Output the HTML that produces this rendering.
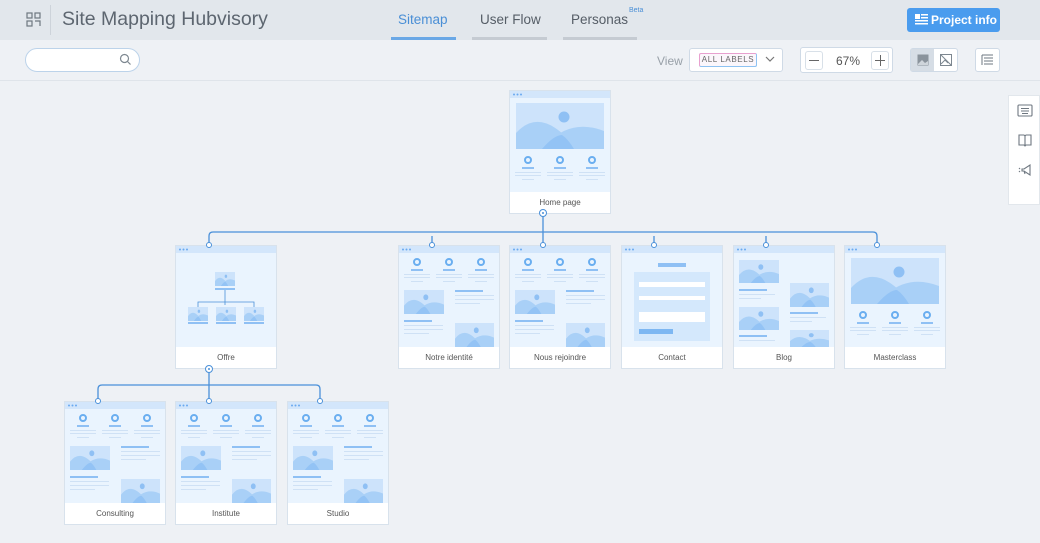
<!DOCTYPE html>
<html><head><meta charset="utf-8"><style>
*{box-sizing:border-box;margin:0;padding:0}
body{width:1040px;height:543px;overflow:hidden;background:#eef1f5;font-family:"Liberation Sans",sans-serif;position:relative}
.hdr{position:absolute;left:0;top:0;width:1040px;height:40px;background:#e2e7ec}
.title{position:absolute;left:62px;top:8px;font-size:19.5px;color:#5d6670}
.div{position:absolute;left:50px;top:5px;width:1px;height:30px;background:#cdd3da}
.tab{position:absolute;top:12px;font-size:13.5px;color:#555d66}
.ul{position:absolute;top:37px;height:3px;background:#c5cbd2}
.btn{position:absolute;left:907px;top:8px;width:93px;height:24px;background:#4a9cee;border-radius:3px;color:#fff;font-size:12px;font-weight:bold;line-height:24px;padding-left:24px;white-space:nowrap}
.box{position:absolute;background:#fff;border:1px solid #cfdae6;border-radius:3px}
</style></head><body>
<div class="hdr">
 <svg style="position:absolute;left:26px;top:12px" width="15" height="15" viewBox="0 0 15 15" fill="none" stroke="#6e7780" stroke-width="1.2"><rect x="1" y="1" width="5" height="5"/><rect x="9" y="1" width="5" height="5"/><rect x="1" y="9" width="5" height="5"/><path d="M9 9h5v5"/></svg>
 <div class="div"></div>
 <div class="title">Site Mapping Hubvisory</div>
 <div class="tab" style="left:398px;color:#4a8fd6">Sitemap</div>
 <div class="ul" style="left:391px;width:65px;background:#6aa8e6"></div>
 <div class="tab" style="left:480px">User Flow</div>
 <div class="ul" style="left:472px;width:75px"></div>
 <div class="tab" style="left:571px">Personas</div>
 <div style="position:absolute;left:629px;top:7px;font-size:7px;color:#4a8fd6">Beta</div>
 <div class="ul" style="left:563px;width:74px"></div>
 <div class="btn"><svg style="position:absolute;left:8px;top:6px" width="13" height="12" viewBox="0 0 13 12" fill="#fff"><rect x="0" y="0" width="5" height="5"/><rect x="6" y="0" width="7" height="1.5"/><rect x="6" y="3" width="7" height="1.5"/><rect x="0" y="6" width="13" height="1.5"/><rect x="0" y="9" width="13" height="1.5"/></svg>Project info</div>
</div>
<div class="box" style="left:25px;top:48px;width:115px;height:24px;border-radius:12px;border-color:#bcd3ea"></div>
<svg style="position:absolute;left:119px;top:53px" width="13" height="13" viewBox="0 0 13 13" fill="none" stroke="#7d8790" stroke-width="1.2"><circle cx="5.5" cy="5.5" r="4"/><path d="M8.5 8.5l3 3"/></svg>
<div style="position:absolute;left:0;top:80px;width:1040px;height:1px;background:#dfe4ea"></div>
<div style="position:absolute;left:657px;top:54px;font-size:12px;color:#98a0a8">View</div>
<div class="box" style="left:689px;top:48px;width:94px;height:24px"></div>
<div style="position:absolute;left:699px;top:53px;width:58px;height:14px;border:1px solid;border-color:#e8a0cf #8ec2f2 #8ec2f2 #e8a0cf;border-radius:2px;background:#fbf6fb;font-size:8px;letter-spacing:.6px;color:#666;text-align:center;line-height:12px">ALL LABELS</div>
<svg style="position:absolute;left:765px;top:56px" width="10" height="7" viewBox="0 0 10 7" fill="none" stroke="#777" stroke-width="1.2"><path d="M1 1l4 4 4-4"/></svg>
<div class="box" style="left:800px;top:47px;width:93px;height:26px"></div>
<div class="box" style="left:805px;top:51px;width:18px;height:19px;border-color:#d8e0e8"></div>
<div style="position:absolute;left:809px;top:60px;width:10px;height:1px;background:#666"></div>
<div style="position:absolute;left:836px;top:54px;font-size:12px;color:#555">67%</div>
<div class="box" style="left:871px;top:51px;width:18px;height:19px;border-color:#d8e0e8"></div>
<div style="position:absolute;left:875px;top:60px;width:10px;height:1px;background:#666"></div>
<div style="position:absolute;left:879.5px;top:55px;width:1px;height:11px;background:#666"></div>
<div class="box" style="left:910px;top:48px;width:48px;height:24px"></div>
<div style="position:absolute;left:911px;top:49px;width:23px;height:22px;background:#d6dde5"></div>
<svg style="position:absolute;left:917px;top:54px" width="12" height="12" viewBox="0 0 12 12"><rect x=".5" y=".5" width="11" height="11" fill="#8a939c"/><path d="M1 10l4-4 3 3 3-2v4H1z" fill="#cfd5db"/></svg>
<svg style="position:absolute;left:940px;top:54px" width="12" height="12" viewBox="0 0 12 12" fill="none" stroke="#7d8790" stroke-width="1"><rect x=".5" y=".5" width="11" height="11"/><path d="M1 1l10 10M1 10l4-4 3 3"/></svg>
<div class="box" style="left:975px;top:48px;width:25px;height:24px"></div>
<svg style="position:absolute;left:981px;top:54px" width="13" height="12" viewBox="0 0 13 12" fill="none" stroke="#6e7780" stroke-width="1"><path d="M1 1h11M3 4h9M3 7h9M3 10h9M1 1v10"/></svg>
<div style="position:absolute;left:1008px;top:95px;width:32px;height:110px;background:#fff;border:1px solid #e2e7ec"></div>
<svg style="position:absolute;left:1017px;top:104px" width="16" height="76" viewBox="0 0 16 76" fill="none" stroke="#6e7780" stroke-width="1.1"><rect x="1" y="1" width="14" height="11" rx="1"/><path d="M4 4.5h8M4 7h8M5 9.5h6"/><path d="M2 41V31h5l1 1 1-1h5v10H9l-1 1-1-1zM8 32v9"/><path d="M5 65h2l6-4v10l-6-4H5zM7 67l1 3M2 64l1 1M2 68l1-1"/></svg>

<svg style="position:absolute;left:0;top:0" width="1040" height="543" viewBox="0 0 1040 543">
<defs>
 <symbol id="img" viewBox="0 0 88 46" preserveAspectRatio="none">
  <rect width="88" height="46" fill="#cde3fb"/>
  <path d="M0 30Q22 6 50 34V46H0z" fill="#a9d0f7"/>
  <path d="M26 46Q52 14 88 28V46z" fill="#a9d0f7"/>
  <path d="M26 46Q38 32 46 32Q52 36 58 46z" fill="#93c3f5"/>
  <circle cx="48" cy="14" r="5.5" fill="#8fc0f4"/>
 </symbol>
 <g id="frame">
  <rect x=".5" y=".5" width="101" height="123" fill="#fff" stroke="#d8e2ec"/>
  <rect x="1" y="1" width="100" height="101" fill="#eaf4fe"/>
  <rect x="1" y="1" width="100" height="7" fill="#d3e6fb"/>
  <circle cx="5" cy="4.5" r="1" fill="#6aaaf0"/><circle cx="8.5" cy="4.5" r="1" fill="#6aaaf0"/><circle cx="12" cy="4.5" r="1" fill="#6aaaf0"/>
 </g>
 <g id="icons">
  <g fill="none" stroke="#6aaef0" stroke-width="2"><circle cx="19" cy="0" r="3"/><circle cx="51" cy="0" r="3"/><circle cx="83" cy="0" r="3"/></g>
  <g fill="#8fc0f4"><rect x="13" y="7" width="12" height="2"/><rect x="45" y="7" width="12" height="2"/><rect x="77" y="7" width="12" height="2"/></g>
  <g fill="#cfe1f5"><rect x="6" y="12" width="26" height="1"/><rect x="38" y="12" width="26" height="1"/><rect x="70" y="12" width="26" height="1"/><rect x="6" y="15" width="26" height="1"/><rect x="38" y="15" width="26" height="1"/><rect x="70" y="15" width="26" height="1"/><rect x="13" y="19" width="12" height="1"/><rect x="45" y="19" width="12" height="1"/><rect x="77" y="19" width="12" height="1"/></g>
 </g>
 <g id="tA"><use href="#frame"/><use href="#img" x="7" y="13" width="88" height="46"/><use href="#icons" y="70"/></g>
 <g id="tB"><use href="#frame"/><use href="#icons" y="17"/>
  <use href="#img" x="6" y="45" width="40" height="24"/>
  <g fill="#8fc0f4"><rect x="57" y="45" width="28" height="2"/><rect x="6" y="75" width="28" height="2"/></g>
  <g fill="#cfe1f5"><rect x="57" y="50" width="39" height="1"/><rect x="57" y="54" width="39" height="1"/><rect x="57" y="58" width="25" height="1"/><rect x="6" y="80" width="39" height="1"/><rect x="6" y="84" width="39" height="1"/><rect x="6" y="88" width="25" height="1"/></g>
  <use href="#img" x="57" y="78" width="39" height="24"/></g>
 <g id="lbl"><rect x="1" y="102" width="100" height="21" fill="#fff"/></g>
</defs>
<g fill="none" stroke="#4a90d9" stroke-width="1.3">
 <path d="M543 213V245M209 245V236Q209 232 213 232H873Q877 232 877 236V245M432 245V236M654 245V236M766 245V236"/>
 <path d="M209 369V401M98 401V389Q98 385 102 385H316Q320 385 320 389V401"/>
</g>
<g transform="translate(509,90)"><use href="#tA"/><use href="#lbl"/></g>
<g transform="translate(398,245)"><use href="#tB"/><use href="#lbl"/></g>
<g transform="translate(509,245)"><use href="#tB"/><use href="#lbl"/></g>
<g transform="translate(844,245)"><use href="#tA"/><use href="#lbl"/></g>
<g transform="translate(64,401)"><use href="#tB"/><use href="#lbl"/></g>
<g transform="translate(175,401)"><use href="#tB"/><use href="#lbl"/></g>
<g transform="translate(287,401)"><use href="#tB"/><use href="#lbl"/></g>
<g transform="translate(175,245)"><use href="#frame"/><use href="#lbl"/>
 <use href="#img" x="40" y="27" width="20" height="14"/><rect x="40" y="43" width="20" height="2" fill="#8fc0f4"/>
 <g fill="none" stroke="#4a90d9" stroke-width=".8"><path d="M50 45V60M23 62V57H79V62"/></g>
 <use href="#img" x="13" y="62" width="20" height="14"/><use href="#img" x="41" y="62" width="20" height="14"/><use href="#img" x="69" y="62" width="20" height="14"/>
 <g fill="#8fc0f4"><rect x="13" y="77" width="20" height="2"/><rect x="41" y="77" width="20" height="2"/><rect x="69" y="77" width="20" height="2"/></g></g>
<g transform="translate(621,245)"><use href="#frame"/><use href="#lbl"/>
 <rect x="37" y="18" width="28" height="4" fill="#8fc0f4"/>
 <rect x="13" y="27" width="76" height="69" fill="#d4e8fc"/>
 <g fill="#fff"><rect x="18" y="37" width="66" height="5"/><rect x="18" y="51" width="66" height="4"/><rect x="18" y="67" width="66" height="10"/></g>
 <rect x="18" y="84" width="34" height="5" fill="#7db7f2"/></g>
<g transform="translate(733,245)"><use href="#frame"/><use href="#lbl"/>
 <use href="#img" x="6" y="15" width="40" height="23"/><use href="#img" x="6" y="62" width="40" height="23"/>
 <use href="#img" x="57" y="38" width="39" height="24"/><use href="#img" x="57" y="85" width="39" height="17"/>
 <g fill="#8fc0f4"><rect x="6" y="44" width="28" height="2"/><rect x="57" y="67" width="28" height="2"/><rect x="6" y="90" width="28" height="2"/></g>
 <g fill="#cfe1f5"><rect x="6" y="49" width="36" height="1"/><rect x="6" y="53" width="22" height="1"/><rect x="57" y="72" width="36" height="1"/><rect x="57" y="76" width="22" height="1"/><rect x="6" y="95" width="36" height="1"/></g></g>
<g font-family="Liberation Sans,sans-serif" font-size="8" fill="#555" text-anchor="middle">
 <text x="560" y="205">Home page</text><text x="226" y="360">Offre</text><text x="449" y="360">Notre identité</text><text x="560" y="360">Nous rejoindre</text><text x="672" y="360">Contact</text><text x="784" y="360">Blog</text><text x="895" y="360">Masterclass</text><text x="115" y="516">Consulting</text><text x="226" y="516">Institute</text><text x="338" y="516">Studio</text>
</g>
<g fill="#fff" stroke="#4a90d9" stroke-width="1">
 <circle cx="543" cy="213" r="3.5"/><circle cx="209" cy="369" r="3.5"/>
 <circle cx="209" cy="245" r="2.5"/><circle cx="432" cy="245" r="2.5"/><circle cx="543" cy="245" r="2.5"/><circle cx="654" cy="245" r="2.5"/><circle cx="766" cy="245" r="2.5"/><circle cx="877" cy="245" r="2.5"/>
 <circle cx="98" cy="401" r="2.5"/><circle cx="209" cy="401" r="2.5"/><circle cx="320" cy="401" r="2.5"/>
</g>
<g fill="#4a90d9"><circle cx="543" cy="213" r="1"/><circle cx="209" cy="369" r="1"/></g>
</svg>
</body></html>
